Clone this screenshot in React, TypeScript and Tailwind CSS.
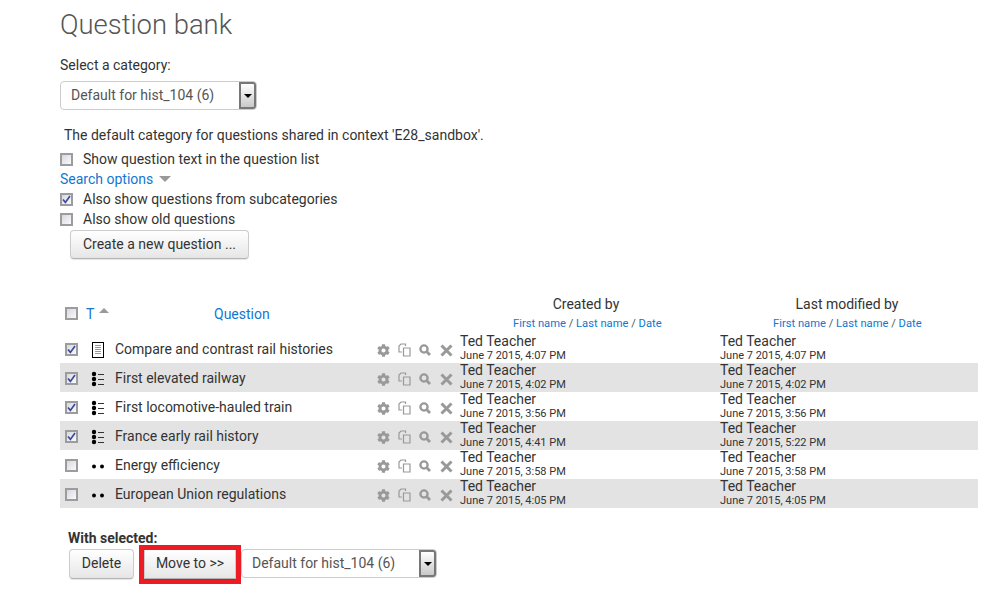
import { FaCog } from 'react-icons/fa';

const rows = [
  { name: 'Compare and contrast rail histories', type: 'essay', checked: true, created: 'June 7 2015, 4:07 PM', modified: 'June 7 2015, 4:07 PM' },
  { name: 'First elevated railway', type: 'multi', checked: true, created: 'June 7 2015, 4:02 PM', modified: 'June 7 2015, 4:02 PM' },
  { name: 'First locomotive-hauled train', type: 'multi', checked: true, created: 'June 7 2015, 3:56 PM', modified: 'June 7 2015, 3:56 PM' },
  { name: 'France early rail history', type: 'multi', checked: true, created: 'June 7 2015, 4:41 PM', modified: 'June 7 2015, 5:22 PM' },
  { name: 'Energy efficiency', type: 'tf', checked: false, created: 'June 7 2015, 3:58 PM', modified: 'June 7 2015, 3:58 PM' },
  { name: 'European Union regulations', type: 'tf', checked: false, created: 'June 7 2015, 4:05 PM', modified: 'June 7 2015, 4:05 PM' },
];

function Check({ checked = false }: { checked?: boolean }) {
  return (
    <span className="flex h-[13px] w-[13px] shrink-0 items-center justify-center border-2 border-[#9c9c9c] bg-gradient-to-br from-[#d6d9e0] to-[#fafafc]">
      {checked && (
        <svg width="9" height="9" viewBox="0 0 9 9">
          <path d="M1 4.5 L3.4 7.4 L8 1" fill="none" stroke="#3b4a9c" strokeWidth="1.7" />
        </svg>
      )}
    </span>
  );
}

function Select({ className }: { className: string }) {
  return (
    <div className={`flex h-[29px] items-center rounded-[4px] border border-[#ccc] bg-white pl-[10px] text-[#555] ${className}`}>
      <span className="flex-1">Default for hist_104 (6)</span>
      <span className="flex h-[27px] w-[17px] items-center justify-center rounded-r-[3px] border-2 border-[#777] bg-gradient-to-b from-white to-[#c9c9c9]">
        <span className="h-0 w-0 border-x-[4px] border-t-[4px] border-x-transparent border-t-black" />
      </span>
    </div>
  );
}

function Button({ label, className }: { label: string; className: string }) {
  return (
    <button className={`flex h-[29px] items-center justify-center rounded-[4px] border border-[#ccc] border-b-[#b3b3b3] bg-gradient-to-b from-white to-[#e6e6e6] text-[14px] text-[#333] shadow-[0_1px_1px_rgba(0,0,0,0.1)] ${className}`}>
      {label}
    </button>
  );
}

function TypeIcon({ type }: { type: string }) {
  if (type === 'essay') {
    return (
      <svg width="14" height="16" viewBox="0 0 14 16">
        <rect x="1.5" y="0.5" width="11" height="15" fill="#fff" stroke="#000" />
        <path d="M4 3.5h6M4 5.5h6M4 7.5h6M4 9.5h6M4 11.5h6" stroke="#999" strokeWidth="1" />
      </svg>
    );
  }
  if (type === 'multi') {
    return (
      <svg width="14" height="16" viewBox="0 0 14 16">
        <circle cx="3" cy="3" r="2.2" fill="#000" />
        <circle cx="3" cy="8" r="2.2" fill="#000" />
        <circle cx="3" cy="13" r="2.2" fill="#000" />
        <path d="M7 3.5h6M7 8.5h6M7 13.5h6" stroke="#333" strokeWidth="1" />
      </svg>
    );
  }
  return (
    <svg width="14" height="16" viewBox="0 0 14 16">
      <circle cx="3" cy="8.5" r="2" fill="#000" />
      <circle cx="11" cy="8.5" r="2" fill="#000" />
    </svg>
  );
}

function CopyIcon() {
  return (
    <svg width="13" height="14" viewBox="0 0 13 14" fill="none" stroke="#999" strokeWidth="1.2">
      <path d="M7.5 3V1H3L1 3v6h3" />
      <path d="M5.5 5h6.5v8H5.5z" />
    </svg>
  );
}

function SearchIcon() {
  return (
    <svg width="12" height="12" viewBox="0 0 12 12" fill="none" stroke="#999">
      <circle cx="5" cy="5" r="3.6" strokeWidth="2.3" />
      <path d="M7.8 7.8L11 11" strokeWidth="2.8" />
    </svg>
  );
}

function CrossIcon() {
  return (
    <svg width="13" height="13" viewBox="0 0 13 13" fill="none" stroke="#999" strokeWidth="3">
      <path d="M1.5 1.5L11.5 11.5M11.5 1.5L1.5 11.5" />
    </svg>
  );
}

function SubLinks() {
  return (
    <div className="text-[11.2px] leading-[14px] text-[#555]">
      <span className="text-[#1177d1]">First name</span> / <span className="text-[#1177d1]">Last name</span> / <span className="text-[#1177d1]">Date</span>
    </div>
  );
}

function Who({ date }: { date: string }) {
  return (
    <div className="flex flex-col">
      <span className="text-[14px] leading-[14px] text-[#333]">Ted Teacher</span>
      <span className="mt-[1px] text-[11px] leading-[14px] text-[#333]">{date}</span>
    </div>
  );
}

export default function App() {
  return (
    <div className="h-[590px] w-[994px] overflow-hidden bg-white pl-[60px] pt-[8px] text-[14px] text-[#333] [font-family:Roboto,sans-serif]">
      <h1 className="text-[27.4px] font-light leading-[34px] text-[#555]">Question bank</h1>

      <div className="mt-[14px] leading-[18px]">Select a category:</div>
      <Select className="mt-[7px] w-[197px]" />

      <p className="ml-[4px] mt-[16px] leading-[18px]">The default category for questions shared in context 'E28_sandbox'.</p>

      <label className="mt-[5px] flex h-[20px] items-center gap-[10px]">
        <Check />
        <span>Show question text in the question list</span>
      </label>
      <div className="flex h-[20px] items-center gap-[6px] text-[#1177d1]">
        Search options
        <span className="h-0 w-0 border-x-[6px] border-t-[6px] border-x-transparent border-t-[#999]" />
      </div>
      <label className="flex h-[20px] items-center gap-[10px]">
        <Check checked />
        <span>Also show questions from subcategories</span>
      </label>
      <label className="flex h-[20px] items-center gap-[10px]">
        <Check />
        <span>Also show old questions</span>
      </label>
      <Button label="Create a new question ..." className="ml-[10px] mt-[1px] w-[179px]" />

      <div className="mt-[35px] flex h-[40px] w-[918px]">
        <div className="flex w-[154px] items-start pl-[5px] pt-[13px]">
          <Check />
          <span className="ml-[8px] mt-[-3px] text-[#1177d1]">T</span>
          <span className="ml-[5px] mt-[1px] h-0 w-0 border-x-[5px] border-b-[5px] border-x-transparent border-b-[#999]" />
        </div>
        <div className="w-[246px] pt-[10px] text-[#1177d1]">Question</div>
        <div className="w-[260px] pt-[1px]">
          <div className="ml-[25px] w-[202px] pb-[3px] text-center leading-[18px] text-[#333]">Created by</div>
          <div className="mt-[1px] pl-[53px]"><SubLinks /></div>
        </div>
        <div className="flex-1 pt-[1px]">
          <div className="ml-[26px] w-[202px] pb-[3px] text-center leading-[18px]">Last modified by</div>
          <div className="mt-[1px] pl-[53px]"><SubLinks /></div>
        </div>
      </div>

      <div className="w-[918px]">
        {rows.map((row, i) => (
          <div key={row.name} className={`flex h-[29px] items-center ${i % 2 === 1 ? 'bg-[#e3e3e3]' : 'bg-white'}`}>
            <div className="flex w-[31px] pl-[5px] pt-[2px]"><Check checked={row.checked} /></div>
            <div className="flex w-[24px] pt-[3px]"><TypeIcon type={row.type} /></div>
            <div className="w-[262px] truncate pt-[2px]">{row.name}</div>
            <div className="flex w-[83px] items-center gap-[8px] pt-[3px] text-[#999]">
              <FaCog size={13} />
              <CopyIcon />
              <SearchIcon />
              <span className="ml-[1px]"><CrossIcon /></span>
            </div>
            <div className="w-[260px]"><Who date={row.created} /></div>
            <div className="flex-1"><Who date={row.modified} /></div>
          </div>
        ))}
      </div>

      <div className="ml-[8px] mt-[23px] font-bold leading-[15px]">With selected:</div>
      <div className="ml-[9px] -mt-[1px] flex items-center">
        <Button label="Delete" className="-mt-[2px] h-[30px] w-[65px]" />
        <div className="ml-[5px] border-[5px] border-[#ed1c24]">
          <Button label="Move to >>" className="h-[28px] w-[92px] rounded-none border-t-0 pb-[2px]" />
        </div>
        <Select className="-mt-[2px] w-[196px]" />
      </div>
    </div>
  );
}
